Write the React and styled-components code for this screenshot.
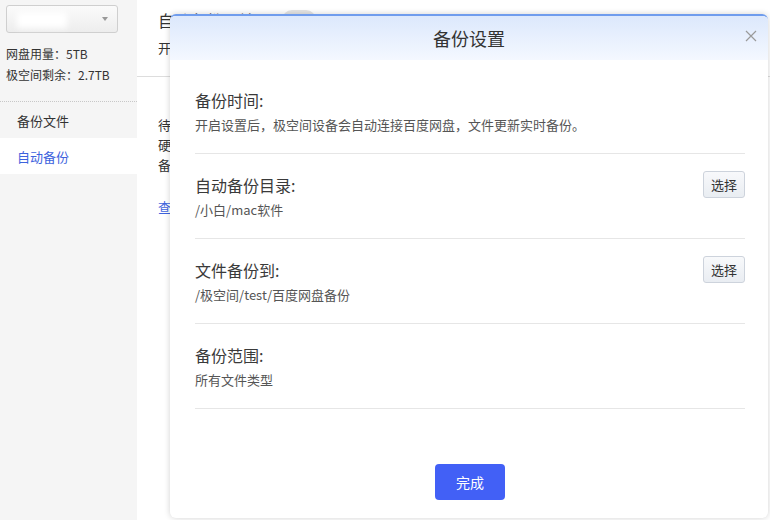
import styled, { createGlobalStyle } from "styled-components";

const GlobalStyle = createGlobalStyle`
  html, body {
    margin: 0;
    padding: 0;
    background: #fff;
    font-family: "Noto Sans CJK SC", "Noto Sans", sans-serif;
  }
  * {
    box-sizing: border-box;
  }
`;

const Page = styled.div`
  position: relative;
  display: flex;
  width: 770px;
  height: 520px;
  overflow: hidden;
`;

const Sidebar = styled.aside`
  width: 137px;
  flex-shrink: 0;
  background: #f5f5f5;
  display: flex;
  flex-direction: column;
`;

const Picker = styled.div`
  position: relative;
  margin: 5px 0 0 6px;
  width: 112px;
  height: 28px;
  border: 1px solid #cfcfcf;
  border-radius: 3px;
  background: linear-gradient(#fbfbfb, #ededed);
  display: flex;
  align-items: center;
  justify-content: flex-end;
  padding-right: 9px;
`;

const Blurred = styled.div`
  position: absolute;
  left: 10px;
  top: 6px;
  width: 50px;
  height: 16px;
  background: #fff;
  filter: blur(3px);
`;

const Caret = styled.span`
  width: 0;
  height: 0;
  border-left: 3px solid transparent;
  border-right: 3px solid transparent;
  border-top: 4px solid #999;
`;

const Stats = styled.div`
  padding: 10px 0 16px 6px;
  font-size: 12px;
  line-height: 21px;
  color: #333;
  border-bottom: 1px dotted #c8c8c8;
`;

const NavItem = styled.div`
  height: 36px;
  display: flex;
  align-items: center;
  padding-left: 17px;
  font-size: 13px;
  color: ${(p) => (p.$active ? "#3e63dd" : "#333")};
  background: ${(p) => (p.$active ? "#fff" : "transparent")};
`;

const Main = styled.main`
  flex: 1;
  display: flex;
  flex-direction: column;
`;

const MainHead = styled.div`
  padding: 8px 0 0 21px;
  border-bottom: 1px solid #ddd;
  height: 77px;
`;

const MainTitle = styled.div`
  display: flex;
  align-items: center;
  gap: 28px;
  font-size: 16px;
  line-height: 24px;
  color: #333;
`;

const Toggle = styled.span`
  width: 34px;
  height: 20px;
  border-radius: 10px;
  background: #e4e4e4;
`;

const MainDesc = styled.div`
  margin-top: 6px;
  font-size: 13px;
  color: #333;
`;

const MainBody = styled.div`
  padding: 38px 0 0 21px;
  font-size: 13px;
  line-height: 20px;
  color: #333;
`;

const MoreLink = styled.div`
  margin-top: 22px;
  color: #3e63dd;
`;

const Modal = styled.div`
  position: absolute;
  left: 170px;
  top: 14px;
  width: 598px;
  height: 504px;
  background: #fff;
  border-radius: 6px;
  border-top: 2px solid #6f9ced;
  box-shadow: 0 0 6px rgba(0, 0, 0, 0.18);
  display: flex;
  flex-direction: column;
  overflow: hidden;
`;

const ModalHeader = styled.div`
  position: relative;
  height: 44px;
  flex-shrink: 0;
  background: linear-gradient(#dce8fc, #f4f8ff);
  display: flex;
  align-items: center;
  justify-content: center;
  font-size: 18px;
  color: #333;
`;

const Close = styled.span`
  position: absolute;
  right: 11px;
  top: 14px;
  width: 12px;
  height: 12px;
  display: flex;
`;

const ModalBody = styled.div`
  flex: 1;
  display: flex;
  flex-direction: column;
  padding: 9px 23px 18px 25px;
`;

const Section = styled.div`
  display: flex;
  justify-content: space-between;
  align-items: flex-start;
  padding: 20px 0 18px;
  border-bottom: 1px solid #e6e6e6;
`;

const SectionText = styled.div`
  display: flex;
  flex-direction: column;
  gap: 4px;
`;

const Label = styled.div`
  font-size: 16px;
  line-height: 22px;
  color: #3a3a3a;
`;

const Value = styled.div`
  font-size: 13px;
  line-height: 20px;
  color: #555;
`;

const PickButton = styled.button`
  margin-top: -3px;
  width: 42px;
  height: 27px;
  padding: 0;
  border: 1px solid #cdd3dc;
  border-radius: 3px;
  background: linear-gradient(#f8f9fb, #e9edf2);
  font-family: inherit;
  font-size: 13px;
  color: #333;
`;

const Footer = styled.div`
  margin-top: auto;
  display: flex;
  justify-content: center;
`;

const DoneButton = styled.button`
  width: 70px;
  height: 36px;
  border: none;
  border-radius: 4px;
  background: #4260f6;
  color: #fff;
  font-family: inherit;
  font-size: 14px;
`;

const sections = [
  {
    label: "备份时间:",
    value: "开启设置后，极空间设备会自动连接百度网盘，文件更新实时备份。",
  },
  { label: "自动备份目录:", value: "/小白/mac软件", pick: true },
  { label: "文件备份到:", value: "/极空间/test/百度网盘备份", pick: true },
  { label: "备份范围:", value: "所有文件类型" },
];

export default function App() {
  return (
    <>
      <GlobalStyle />
      <Page>
        <Sidebar>
          <Picker>
            <Blurred />
            <Caret />
          </Picker>
          <Stats>
            <div>网盘用量：5TB</div>
            <div>极空间剩余：2.7TB</div>
          </Stats>
          <NavItem>备份文件</NavItem>
          <NavItem $active>自动备份</NavItem>
        </Sidebar>

        <Main>
          <MainHead>
            <MainTitle>
              自动备份开关
              <Toggle />
            </MainTitle>
            <MainDesc>开启后将自动备份百度网盘文件</MainDesc>
          </MainHead>
          <MainBody>
            <div>待备份文件</div>
            <div>硬盘剩余空间</div>
            <div>备份进度</div>
            <MoreLink>查看详情</MoreLink>
          </MainBody>
        </Main>

        <Modal>
          <ModalHeader>
            备份设置
            <Close>
              <svg width="12" height="12" viewBox="0 0 12 12">
                <path
                  d="M1 1 L11 11 M11 1 L1 11"
                  stroke="#9a9a9a"
                  strokeWidth="1.2"
                  fill="none"
                />
              </svg>
            </Close>
          </ModalHeader>
          <ModalBody>
            {sections.map((s) => (
              <Section key={s.label}>
                <SectionText>
                  <Label>{s.label}</Label>
                  <Value>{s.value}</Value>
                </SectionText>
                {s.pick && <PickButton>选择</PickButton>}
              </Section>
            ))}
            <Footer>
              <DoneButton>完成</DoneButton>
            </Footer>
          </ModalBody>
        </Modal>
      </Page>
    </>
  );
}
